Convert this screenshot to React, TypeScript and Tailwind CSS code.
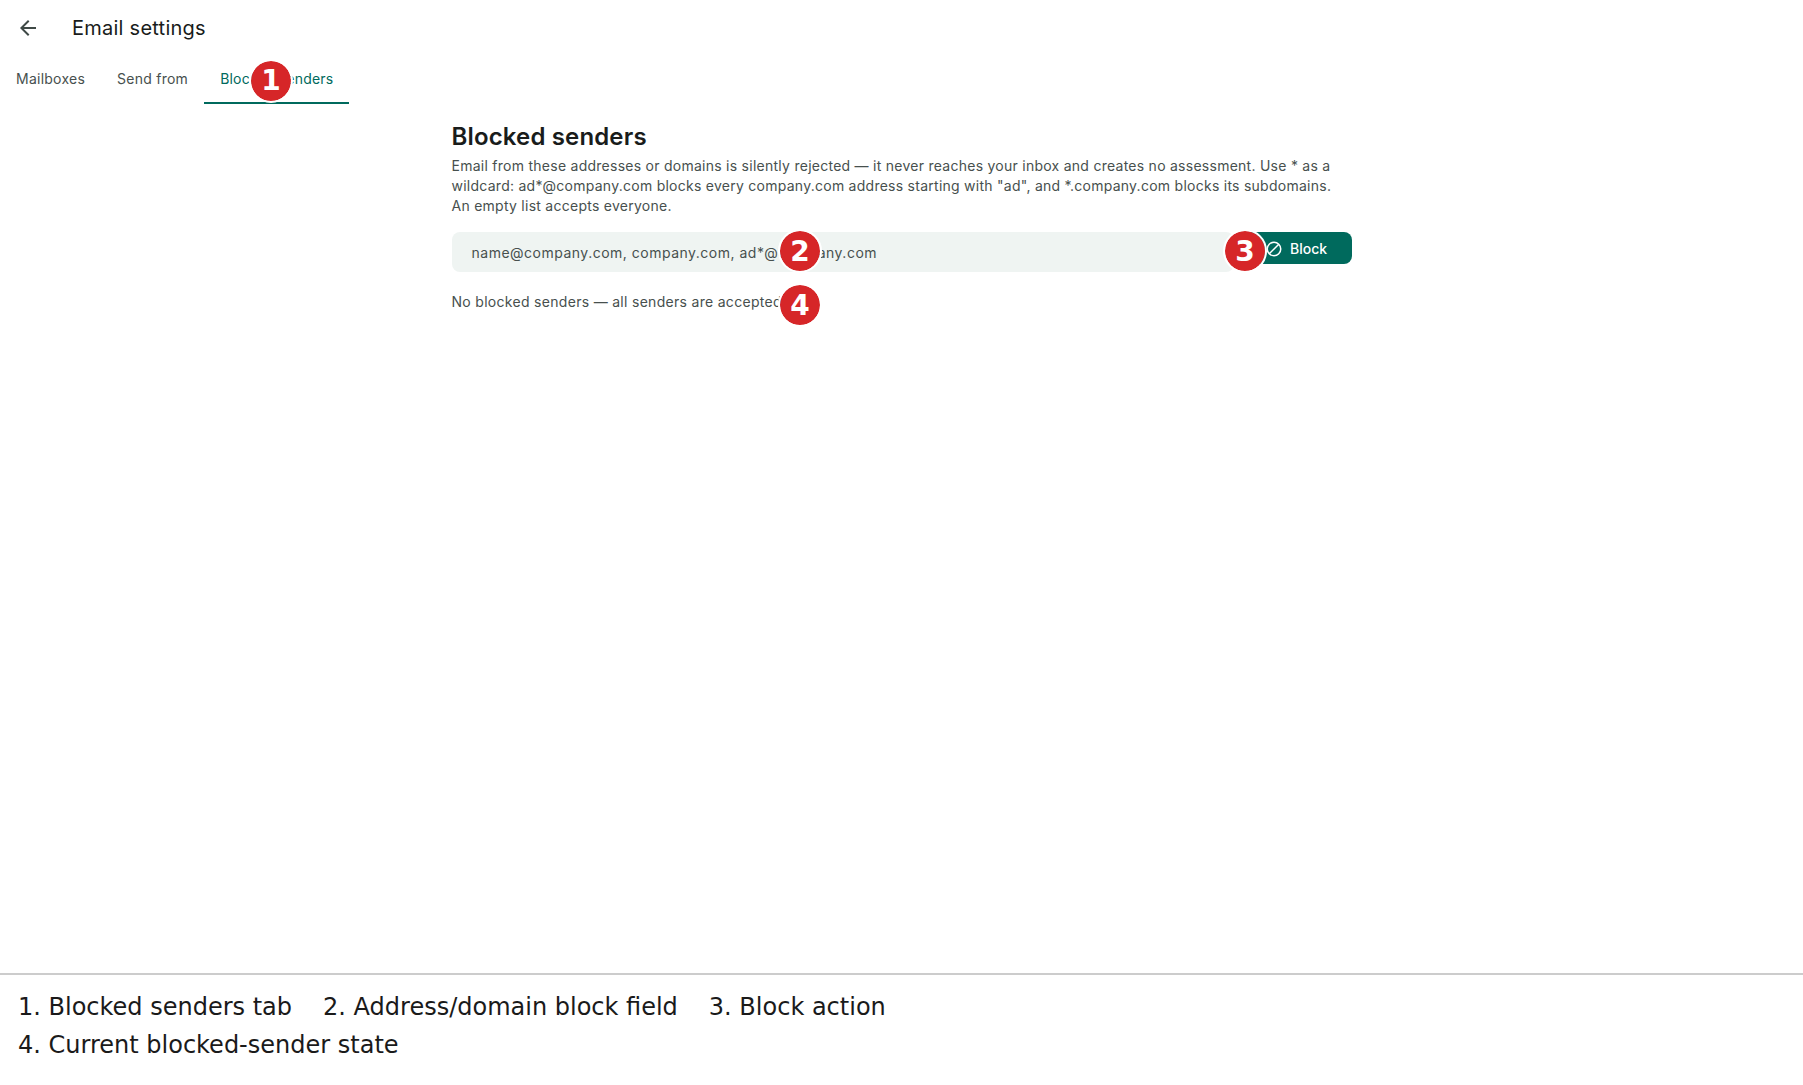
import React from 'react';

const badges = [
  { n: '1', cls: 'left-[251px] top-[60.5px]' },
  { n: '2', cls: 'left-[780px] top-[231px]' },
  { n: '3', cls: 'left-[1225px] top-[231px]' },
  { n: '4', cls: 'left-[780px] top-[285px]' },
];

export default function App() {
  return (
    <div className="relative flex h-[1085px] flex-col bg-white font-['Inter','Liberation_Sans',sans-serif]">
      <div className="flex-1">
        {/* Header */}
        <div className="flex h-14 items-center pl-4">
          <button className="flex h-6 w-6 items-center justify-center text-[#3f4946]">
            <svg viewBox="0 0 24 24" className="h-6 w-6" fill="currentColor">
              <path d="M7.83 13l5.6 5.6L12 20l-8-8 8-8 1.43 1.4-5.6 5.6H20v2H7.83z" />
            </svg>
          </button>
          <h1 className="ml-8 text-[20px] leading-6 tracking-[0.25px] text-[#191c1b]">Email settings</h1>
        </div>

        {/* Tabs */}
        <div className="flex h-12 items-stretch text-sm font-normal tracking-[0.25px]">
          <div className="flex items-center border-b-2 border-transparent px-4 text-[#47504e]">Mailboxes</div>
          <div className="flex items-center border-b-2 border-transparent px-4 text-[#47504e]">Send from</div>
          <div className="flex items-center border-b-2 border-[#006a5d] px-4 tracking-[0.2px] text-[#006a5d]">Blocked senders</div>
        </div>

        {/* Content */}
        <div className="mx-auto mt-[17px] w-[900px]">
          <h2 className="text-[24px] leading-8 font-semibold tracking-[0.15px] text-[#191c1b]">Blocked senders</h2>
          <p className="mt-[3px] text-sm leading-5 tracking-[0.26px] text-[#47504e]">
            Email from these addresses or domains is silently rejected — it never reaches your inbox and creates no assessment. Use * as a wildcard: ad*@company.com blocks every company.com address starting with "ad", and *.company.com blocks its subdomains. An empty list accepts everyone.
          </p>
          <div className="mt-4 flex items-start gap-2">
            <div className="flex h-10 flex-1 items-center rounded-lg bg-[#eff4f2] px-5 pt-px text-sm tracking-[0.5px] text-[#47504e]">
              name@company.com, company.com, ad*@company.com
            </div>
            <button className="flex h-8 w-[110px] items-center justify-center gap-[7px] rounded-lg bg-[#006a5d] pr-px pt-px text-sm font-medium text-white">
              <svg viewBox="0 0 24 24" className="h-[18px] w-[18px]" fill="none" stroke="currentColor" strokeWidth="2">
                <circle cx="12" cy="12" r="9" />
                <path d="M18.4 5.6 5.6 18.4" />
              </svg>
              Block
            </button>
          </div>
          <p className="mt-[20px] text-sm leading-5 tracking-[0.3px] text-[#47504e]">No blocked senders — all senders are accepted.</p>
        </div>
      </div>

      {/* Caption */}
      <div className="h-[112px] border-t-2 border-[#cccccc] px-[18px] pt-[13px] font-['DejaVu_Sans',sans-serif] text-[24px] leading-[38px] text-[#1a1a1a]">
        <div className="flex gap-[31px]">
          <span>1. Blocked senders tab</span>
          <span>2. Address/domain block field</span>
          <span>3. Block action</span>
        </div>
        <div>4. Current blocked-sender state</div>
      </div>

      {/* Callout badges */}
      {badges.map((b) => (
        <div
          key={b.n}
          className={`absolute flex h-10 w-10 items-center justify-center rounded-full bg-[#d62628] pt-px font-['DejaVu_Sans',sans-serif] text-[28px] font-bold text-white outline-2 outline-white ${b.cls}`}
        >
          {b.n}
        </div>
      ))}
    </div>
  );
}
